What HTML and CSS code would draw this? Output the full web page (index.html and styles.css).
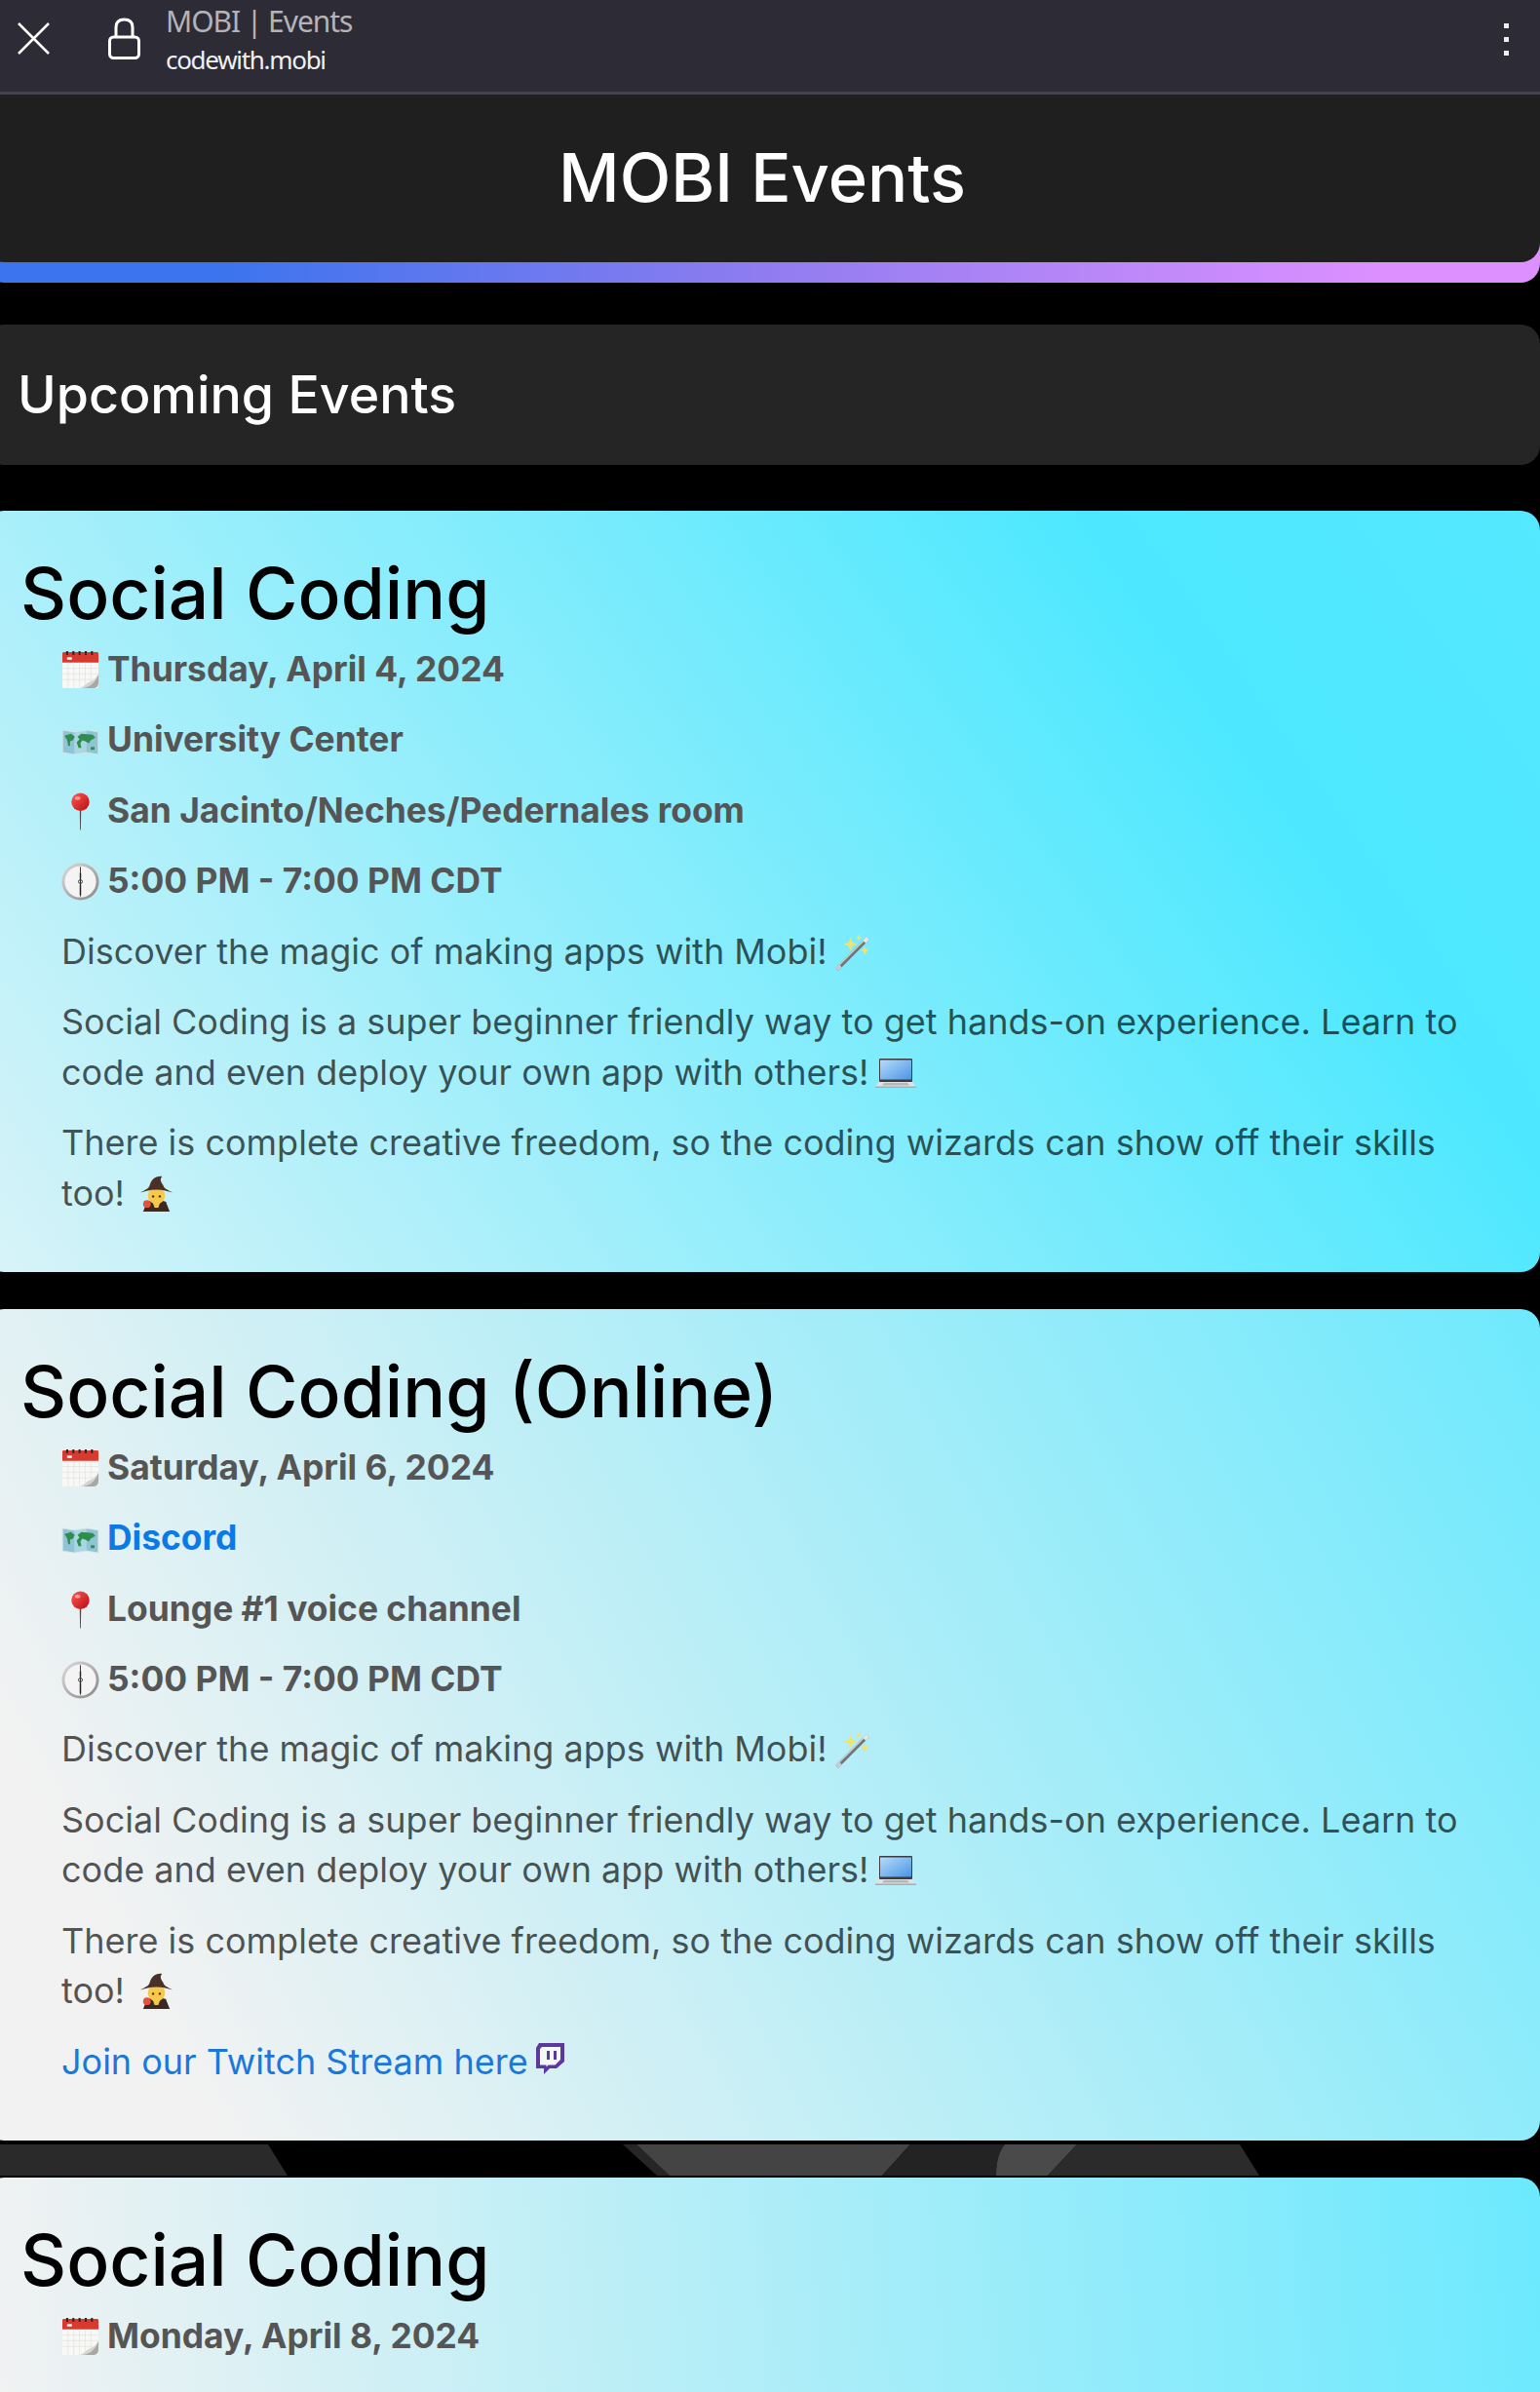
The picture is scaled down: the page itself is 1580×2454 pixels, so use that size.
FILE: index.html
```html
<!DOCTYPE html>
<html lang="en">
<head>
<meta charset="utf-8">
<title>MOBI | Events</title>
<link rel="stylesheet" href="styles.css">
</head>
<body>
<svg class="defs" width="0" height="0" aria-hidden="true">
  <defs>
    <linearGradient id="redBall" x1="0" y1="0" x2="1" y2="1"><stop offset="0" stop-color="#ff5a55"/><stop offset="1" stop-color="#b80b10"/></linearGradient>
    <linearGradient id="screen" x1="0" y1="0" x2="1" y2="1"><stop offset="0" stop-color="#b5dcfa"/><stop offset="1" stop-color="#4b94e4"/></linearGradient>
    <linearGradient id="rim" x1="0" y1="0" x2="1" y2="1"><stop offset="0" stop-color="#dcdcdc"/><stop offset="1" stop-color="#858585"/></linearGradient>
    <symbol id="e-cal" viewBox="0 0 40 40">
      <rect x="1" y="1" width="38" height="38" rx="1.5" fill="#f8f8f6"/>
      <path d="M1 2.5A1.5 1.5 0 0 1 2.500 1H37.500A1.500 1.500 0 0 1 39 2.500V12H1Z" fill="#d93a2f"/>
      <g fill="#3a2323"><rect x="5" y="0" width="2.200" height="4"/><rect x="11.500" y="0" width="2.200" height="4"/><rect x="18" y="0" width="2.200" height="4"/><rect x="24.500" y="0" width="2.200" height="4"/><rect x="31" y="0" width="2.200" height="4"/></g>
      <path d="M6 6.500h5v2.500H6z" fill="#fff"/>
      <path d="M7 12v27M13 12v27M19 12v27M25 12v27M31 12v22M1 18h38M1 24h38M1 30h34" stroke="#dcdcdc" stroke-width=".6" fill="none"/>
      <path d="M39 24V33C39 37 37 39 33 39H20C28 37 36 32 39 24Z" fill="#a8a8a4"/>
      <path d="M39 24C37 28 34 31 28 33C26 35 23 37 20 39C27 39 35 36 39 24Z" fill="#d5d5d0"/>
    </symbol>
    <symbol id="e-map" viewBox="0 0 40 28">
      <path d="M1 1L13.500 3L26.500 1L39 3V27L26.500 25L13.500 27L1 25Z" fill="#a9d6e2"/>
      <path d="M1 1L13.500 3V27L1 25ZM26.500 1L39 3V27L26.500 25Z" fill="#8ec4d6"/>
      <path d="M3 7L10 5L14 8L12 12L9 13L9 18L7 18L6 12ZM17 8L21 5L33 6L36 9L31 12L29 15L25 13L22 12L20 15L21 20L18 20L16 14L19 11Z" fill="#2f8d4d"/>
      <path d="M31 19L35 19L35 22L31 22Z" fill="#2f8d4d"/>
      <path d="M1 1L13.500 3L26.500 1L39 3V27L26.500 25L13.500 27L1 25Z" fill="none" stroke="#d7e4e6" stroke-width="1"/>
    </symbol>
    <symbol id="e-pin" viewBox="0 0 40 40">
      <path d="M19.200 15H20.800L20.400 39.500H19.600Z" fill="#4d4d4d"/>
      <circle cx="20" cy="10" r="9.500" fill="url(#redBall)"/>
      <ellipse cx="17" cy="6" rx="3" ry="2" fill="#ff9a96"/>
    </symbol>
    <symbol id="e-clock" viewBox="0 0 40 40">
      <circle cx="20" cy="20" r="19.500" fill="url(#rim)"/>
      <circle cx="20" cy="20" r="16.500" fill="#f4f4f4"/>
      <path d="M20 4.500V35.500" stroke="#333" stroke-width="1"/>
      <circle cx="20" cy="20" r="2" fill="none" stroke="#333" stroke-width="1"/>
      <path d="M20 11V17M20 23V34" stroke="#222" stroke-width="1.500"/>
    </symbol>
    <symbol id="e-wand" viewBox="0 0 40 40">
      <path d="M2 36L35 3L38 6L5 39Z" fill="#6f7478"/>
      <path d="M2 36L35 3L36 4L3 37Z" fill="#cfd3d6"/>
      <path d="M31 7L35 3L38 6L34 10Z" fill="#e4e6e8"/>
      <path d="M2 36L6 32L9 35L5 39Z" fill="#c9ccce"/>
      <path d="M18 4L20 9L25 11L20 13L18 18L16 13L11 11L16 9ZM33 13L34.500 16L37 17.500L34.500 19L33 22L31.500 19L29 17.500L31.500 16ZM27 0L28 3L30 4L28 5L27 8L26 5L24 4L26 3Z" fill="#f3e36b"/>
    </symbol>
    <symbol id="e-laptop" viewBox="0 0 42 30">
      <rect x="4" y="0" width="34" height="24" rx="1" fill="#3b3b40"/>
      <rect x="5" y="1.500" width="32" height="20" fill="url(#screen)"/>
      <path d="M4 24H38L42 29V30H0V29Z" fill="#dfe2e4"/>
      <path d="M9 25H33L35 27.500H7Z" fill="#b3b7ba"/>
      <rect x="0" y="28.500" width="42" height="1.500" fill="#a9adb0"/>
    </symbol>
    <symbol id="e-witch" viewBox="0 0 40 38">
      <path d="M10 28C12 26 28 26 30 28L34 38H6Z" fill="#3b2a24"/>
      <path d="M16 28H24L22 34H18Z" fill="#f1c94f"/>
      <circle cx="20" cy="21" r="9" fill="#f6c94a"/>
      <path d="M3 18C8 15 12 14 13 10C15 4 19 0 26 1C23 4 25 7 27 10C28 14 32 15 37 18C32 17 27 15 20 15C13 15 8 17 3 18Z" fill="#4a3028"/>
      <circle cx="16.500" cy="22" r="1.200" fill="#4a2c14"/><circle cx="23.500" cy="22" r="1.200" fill="#4a2c14"/>
      <circle cx="10" cy="30" r="4" fill="#e2533f"/>
    </symbol>
    <symbol id="e-twitch" viewBox="0 0 30 32">
      <path d="M4 0H30V19L22 26H15L9 32V26H1V5Z" fill="#5b3a9f"/>
      <path d="M7 4H26V17L20.500 22.500H13.500L11.500 24.500V22.500H5V6Z" fill="#f4f8f9"/>
      <rect x="12" y="8" width="3" height="9" fill="#5b3a9f"/>
      <rect x="19" y="8" width="3" height="9" fill="#5b3a9f"/>
    </symbol>
  </defs>
</svg>

<header class="browser-bar">
  <svg class="icon-close" viewBox="0 0 33 33"><path d="M1 1L32 32M32 1L1 32" stroke="#fff" stroke-width="2.500" fill="none"/></svg>
  <svg class="icon-lock" viewBox="0 0 33 43"><path d="M8 21V10C8 5 11 2 16.500 2C22 2 25 5 25 10V21" stroke="#fff" stroke-width="3" fill="none"/><rect x="1.500" y="20" width="30" height="21.500" rx="4" fill="none" stroke="#fff" stroke-width="3"/></svg>
  <div class="browser-title">
    <div class="browser-name">MOBI | Events</div>
    <div class="browser-url">codewith.mobi</div>
  </div>
  <div class="kebab"><span></span><span></span><span></span></div>
</header>

<div class="page">
  <div class="site-head"><h1>MOBI Events</h1></div>

  <h2 class="section-title">Upcoming Events</h2>

  <article class="card card-a">
    <h3>Social Coding</h3>
    <p class="meta"><svg class="emoji"><use href="#e-cal"/></svg>Thursday, April 4, 2024</p>
    <p class="meta"><svg class="emoji emoji-map"><use href="#e-map"/></svg>University Center</p>
    <p class="meta"><svg class="emoji"><use href="#e-pin"/></svg>San Jacinto/Neches/Pedernales room</p>
    <p class="meta"><svg class="emoji"><use href="#e-clock"/></svg>5:00 PM - 7:00 PM CDT</p>
    <p>Discover the magic of making apps with Mobi!<svg class="emoji emoji-tail"><use href="#e-wand"/></svg></p>
    <p>Social Coding is a super beginner friendly way to get hands-on experience. Learn to code and even deploy your own app with others!<svg class="emoji emoji-laptop"><use href="#e-laptop"/></svg></p>
    <p>There is complete creative freedom, so the coding wizards can show off their skills too! <svg class="emoji emoji-witch"><use href="#e-witch"/></svg></p>
  </article>

  <article class="card card-b">
    <h3>Social Coding (Online)</h3>
    <p class="meta"><svg class="emoji"><use href="#e-cal"/></svg>Saturday, April 6, 2024</p>
    <p class="meta"><svg class="emoji emoji-map"><use href="#e-map"/></svg><a href="#">Discord</a></p>
    <p class="meta"><svg class="emoji"><use href="#e-pin"/></svg>Lounge #1 voice channel</p>
    <p class="meta"><svg class="emoji"><use href="#e-clock"/></svg>5:00 PM - 7:00 PM CDT</p>
    <p>Discover the magic of making apps with Mobi!<svg class="emoji emoji-tail"><use href="#e-wand"/></svg></p>
    <p>Social Coding is a super beginner friendly way to get hands-on experience. Learn to code and even deploy your own app with others!<svg class="emoji emoji-laptop"><use href="#e-laptop"/></svg></p>
    <p>There is complete creative freedom, so the coding wizards can show off their skills too! <svg class="emoji emoji-witch"><use href="#e-witch"/></svg></p>
    <p><a href="#">Join our Twitch Stream here</a> <svg class="emoji emoji-twitch"><use href="#e-twitch"/></svg></p>
  </article>

  <div class="backdrop">
    <svg class="backdrop-art" viewBox="0 0 1596 32" width="1596" height="32">
      <path d="M0 0H291L311 32H0Z" fill="#2a2a2a"/>
      <path d="M655 0H669L703 32H690Z" fill="#262626"/>
      <path d="M669 0H950L921 32H703Z" fill="#444"/>
      <path d="M950 0H1047C1040 8 1038 20 1038 32H921Z" fill="#232323"/>
      <path d="M1047 0H1121L1091 32H1038C1038 20 1040 8 1047 0Z" fill="#4a4a4a"/>
      <path d="M1121 0H1288L1308 32H1091Z" fill="#2b2b2b"/>
    </svg>
  </div>

  <article class="card card-c">
    <h3>Social Coding</h3>
    <p class="meta"><svg class="emoji"><use href="#e-cal"/></svg>Monday, April 8, 2024</p>
  </article>
</div>
</body>
</html>
```

FILE: styles.css
```css
* { box-sizing: border-box; }
html, body {
  margin: 0;
  height: 2454px;
  overflow: hidden;
  background: #000;
}
body { font-family: Inter, "Noto Sans", sans-serif; }
.defs { position: absolute; }

.browser-bar {
  height: 97px;
  background: #2d2c36;
  border-bottom: 3px solid #45444e;
  display: flex;
  align-items: center;
  padding-left: 18px;
  padding-right: 32px;
}
.icon-close { width: 33px; height: 33px; margin-top: -15px; flex: none; }
.icon-lock { width: 33px; height: 43px; margin-left: 60px; margin-top: -16px; flex: none; }
.browser-title { margin-left: 26px; flex: 1; margin-top: -13px; }
.browser-name {
  font: 400 30px/41px "Noto Sans", sans-serif;
  letter-spacing: -1.05px;
  color: #b4b4b8;
}
.browser-url {
  font: 400 26px/38px "Noto Sans", sans-serif;
  letter-spacing: -1.3px;
  color: #f0f0f0;
}
.kebab { display: flex; flex-direction: column; gap: 9px; margin-top: -13px; }
.kebab span { width: 5px; height: 5px; background: #eee; display: block; }

.page { margin-left: -16px; width: 1596px; }

.site-head {
  height: 193px;
  border-radius: 0 0 20px 20px;
  position: relative;
  display: flex;
  align-items: center;
  justify-content: center;
  padding-bottom: 21px;
  background-image: linear-gradient(90deg, #3b74ee 15%, #8f7cf0 50%, #dd90ff 90%);
  overflow: hidden;
}
.site-head::before {
  content: "";
  position: absolute;
  inset: 0 0 21px 0;
  background: #1f1f1f;
  border-radius: 0 0 20px 20px;
}
.site-head h1 {
  position: relative;
  margin: 0;
  font: 500 68.6px/1 Inter, sans-serif;
  color: #fff;
}

.section-title {
  margin: 43px 0 47px;
  height: 144px;
  background: #252525;
  border-radius: 20px;
  color: #fff;
  font: 500 53.7px/144px Inter, sans-serif;
  padding-left: 34px;
}

.card {
  border-radius: 20px;
  padding: 37px 48px 34px 79px;
  color: rgba(0, 0, 0, .68);
  font-size: 36px;
  line-height: 51.6px;
}
.card h3 {
  margin: 0 0 4px -42px;
  color: #000;
  font: 500 73px/96px Inter, sans-serif;
}
.card p { margin: 0 0 20.8px; }
.card a { color: #1a78dc; text-decoration: none; }
.card .meta { font-weight: 700; color: #555; font-size: 35.4px; }
.card .meta a { color: #0a7be6; }

.card-a { background: linear-gradient(55deg, #d8f3f8 0%, #4de8ff 78%, #55e8ff 100%); }
.card-b { margin-top: 38px; background: linear-gradient(62deg, #f2f2f2 12%, #6ee9fd 100%); }
.card-c {
  height: 220px;
  border-radius: 20px 20px 0 0;
  background: linear-gradient(85deg, #f2f2f2 0%, #6ce9fe 100%);
}

.emoji {
  width: 39px;
  height: 39px;
  vertical-align: -8px;
  margin-right: 8px;
}
.emoji-map { height: 27px; vertical-align: -4px; }
.emoji-tail { margin: 0 0 0 6px; }
.emoji-laptop { width: 42px; height: 30px; vertical-align: -3px; margin: 0 0 0 7px; }
.emoji-witch { height: 37px; vertical-align: -6px; margin: 0 0 0 3px; }
.emoji-twitch { width: 30px; height: 32px; vertical-align: 0; margin: 0 0 0 -3px; }

.backdrop { height: 38px; padding-top: 4px; }
.backdrop-art { display: block; }
```
